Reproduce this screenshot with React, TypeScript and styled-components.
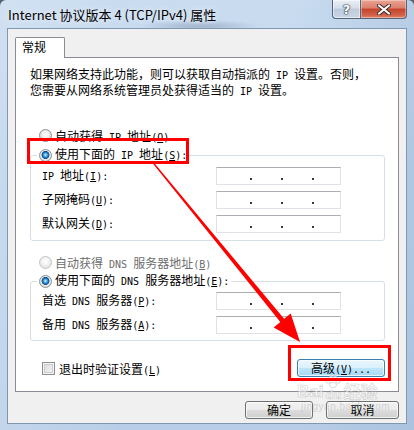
import React from "react";
import styled, { createGlobalStyle } from "styled-components";

const CJK = `"Noto Sans CJK SC", "Noto Sans", sans-serif`;

const GlobalStyle = createGlobalStyle`
  html, body { margin: 0; padding: 0; background: #56616c; }
  body { width: 414px; height: 430px; overflow: hidden; font-family: ${CJK}; font-size: 12px; color: #000; }
  #root { width: 414px; height: 430px; }
`;

const Lat = styled.span`
  font-family: "DejaVu Sans Mono", "Liberation Mono", monospace;
  font-size: 10px;
`;

function mix(s: string) {
  const parts = s.split(/([\x20-\x7E]+)/);
  return parts.map((p, i) => {
    if (!p) return null;
    if (/^[\x20-\x7E]+$/.test(p)) {
      const segs = p.split(/&(.)/);
      return (
        <Lat key={i}>
          {segs.map((s2, j) => (j % 2 === 1 ? <u key={j}>{s2}</u> : s2))}
        </Lat>
      );
    }
    return <React.Fragment key={i}>{p}</React.Fragment>;
  });
}

const Window = styled.div`
  position: relative;
  width: 414px;
  height: 430px;
  box-sizing: border-box;
  padding: 0 7px 6px;
  display: flex;
  flex-direction: column;
  border-radius: 6px 6px 0 0;
  overflow: hidden;
  background:
    radial-gradient(ellipse 60px 6px at 200px 26px, rgba(70, 90, 120, 0.3), rgba(70, 90, 120, 0) 100%),
    linear-gradient(90deg, rgba(255, 255, 255, 0.15), rgba(255, 255, 255, 0) 30%, rgba(255, 255, 255, 0) 70%, rgba(120, 150, 190, 0.2)),
    linear-gradient(180deg, #c9dcf0 0%, #bed3ea 40%, #b8cee8 100%);
`;

const TitleBar = styled.div`
  height: 28px;
  flex: none;
  display: flex;
  align-items: flex-start;
`;

const Title = styled.div`
  margin: 7px 0 0 1px;
  font-size: 13px;
  line-height: 16px;
  white-space: nowrap;
  text-shadow: 0 0 6px rgba(255, 255, 255, 0.9);
`;

const Caption = styled.div`
  display: flex;
  margin-left: auto;
  height: 19px;
`;

const HelpBtn = styled.div`
  width: 28px;
  height: 19px;
  box-sizing: border-box;
  border: 1px solid #56667a;
  border-top: none;
  border-right: none;
  border-radius: 0 0 0 4px;
  background: linear-gradient(180deg, #e9eff6 0%, #d5dfea 45%, #bccbdb 50%, #c9d6e4 100%);
  box-shadow: inset 0 0 0 1px rgba(255, 255, 255, 0.5);
  display: flex;
  align-items: center;
  justify-content: center;
  color: #fff;
  font-family: "DejaVu Sans", sans-serif;
  font-weight: bold;
  font-size: 13px;
  line-height: 13px;
  text-shadow: 0 0 1px #2a3542, 0 0 1px #2a3542, 0 0 2px #2a3542;
`;

const CloseBtn = styled.div`
  width: 47px;
  height: 19px;
  box-sizing: border-box;
  border: 1px solid #56667a;
  border-top: none;
  border-radius: 0 0 4px 0;
  background: linear-gradient(180deg, #e8a493 0%, #dc7f6b 45%, #c4432c 50%, #d2634b 85%, #e0866f 100%);
  box-shadow: inset 0 0 0 1px rgba(255, 255, 255, 0.35);
  display: flex;
  align-items: center;
  justify-content: center;
`;

const Client = styled.div`
  flex: 1;
  display: flex;
  flex-direction: column;
  box-sizing: border-box;
  background: #f0f0f0;
  border: 1px solid #8196b0;
  padding: 8px 7px 0;
`;

const TabStrip = styled.div`
  display: flex;
  height: 20px;
  flex: none;
`;

const Tab = styled.div`
  position: relative;
  z-index: 1;
  box-sizing: border-box;
  width: 50px;
  height: 21px;
  border: 1px solid #898c95;
  border-bottom: none;
  border-radius: 2px 2px 0 0;
  background: #fff;
  padding-left: 6px;
  line-height: 17px;
`;

const Panel = styled.div`
  flex: none;
  box-sizing: border-box;
  border: 1px solid #898c95;
  background: #fff;
  padding: 9px 13px 14px 14px;
  display: flex;
  flex-direction: column;
`;

const Desc = styled.p`
  margin: 0;
  line-height: 14px;
  white-space: nowrap;
`;

const OptionRow = styled.div<{ $mt: number; $disabled?: boolean }>`
  display: flex;
  align-items: center;
  gap: 3px;
  height: 14px;
  margin: ${(p) => p.$mt}px 0 0 9px;
  color: ${(p) => (p.$disabled ? "#6d6d6d" : "#000")};
  white-space: nowrap;
`;

const Radio = styled.span<{ $checked?: boolean; $disabled?: boolean }>`
  flex: none;
  width: 13px;
  height: 13px;
  box-sizing: border-box;
  border-radius: 50%;
  border: 1px solid ${(p) => (p.$disabled ? "#c2c4c6" : "#8e8f8f")};
  background: ${(p) =>
    p.$checked
      ? "radial-gradient(circle at 50% 45%, #dff3fd 0, #6fc0ef 1.2px, #1d7cc2 2.6px, #0c4a84 3.6px, #eef0f2 4.3px, #dadcdf 5.5px)"
      : p.$disabled
      ? "radial-gradient(circle at 50% 40%, #ffffff 0, #f5f5f5 3px, #e6e6e6 6px)"
      : "radial-gradient(circle at 50% 40%, #ffffff 0, #f0f0f0 3px, #d4d6d8 6px)"};
`;

const Group = styled.fieldset<{ $top: number; $bottom: number }>`
  margin: 0;
  min-width: 0;
  border: 1px solid #d5dfe5;
  border-radius: 3px;
  padding: ${(p) => p.$top}px 0 ${(p) => p.$bottom}px 6px;
`;

const Legend = styled.legend`
  padding: 0 2px;
  height: 14px;
  line-height: 14px;
  display: flex;
  align-items: center;
  gap: 3px;
  white-space: nowrap;
`;

const GroupSpacer = styled.div<{ $mt: number }>`
  margin-top: ${(p) => p.$mt}px;
`;

const Fields = styled.div`
  display: grid;
  grid-template-columns: 174px 125px;
  grid-auto-rows: 18px;
  row-gap: 6px;
  margin-left: 5px;
  align-items: center;
`;

const FieldLabel = styled.label`
  line-height: 18px;
  white-space: nowrap;
`;

const IpBox = styled.div`
  height: 18px;
  box-sizing: border-box;
  border: 1px solid #dfe3e9;
  border-top-color: #abadb3;
  background: #fff;
  display: flex;
  align-items: flex-end;
  padding: 0 0 4px 33px;
  gap: 29px;
`;

const Dot = styled.span`
  width: 2px;
  height: 2px;
  background: #3a3a3a;
`;

const BottomRow = styled.div`
  display: flex;
  align-items: center;
  justify-content: space-between;
  margin-top: 18px;
  height: 18px;
`;

const CheckLabel = styled.label`
  display: flex;
  align-items: center;
  gap: 4px;
  margin-left: 12px;
  white-space: nowrap;
`;

const CheckBox = styled.span`
  flex: none;
  width: 13px;
  height: 13px;
  box-sizing: border-box;
  border: 1px solid #8f8f8f;
  background: linear-gradient(135deg, #d6d8db, #f7f7f7);
  box-shadow: inset 0 0 0 1px #f4f4f4, inset 0 0 0 2px #c9ccd0;
`;

const Button = styled.button<{ $default?: boolean; $w: number }>`
  width: ${(p) => p.$w}px;
  height: 18px;
  box-sizing: border-box;
  margin: 0;
  padding: 0;
  border: 1px solid ${(p) => (p.$default ? "#3c7fb1" : "#707070")};
  border-radius: 3px;
  background: ${(p) =>
    p.$default
      ? "linear-gradient(180deg, #eaf6fd 0%, #d9f0fc 50%, #bee6fd 50%, #a7d9f5 100%)"
      : "linear-gradient(180deg, #f2f2f2 0%, #ebebeb 50%, #dddddd 50%, #cfcfcf 100%)"};
  box-shadow: inset 0 0 0 1px rgba(255, 255, 255, 0.7);
  font-family: ${CJK};
  font-size: 12px;
  line-height: 16px;
  color: #000;
  white-space: nowrap;
`;

const DialogButtons = styled.div`
  display: flex;
  justify-content: flex-end;
  gap: 13px;
  margin-top: 9px;
`;

const RedBox = styled.div<{ $x: number; $y: number; $w: number; $h: number }>`
  position: absolute;
  left: ${(p) => p.$x}px;
  top: ${(p) => p.$y}px;
  width: ${(p) => p.$w}px;
  height: ${(p) => p.$h}px;
  box-sizing: border-box;
  border: 3px solid #ff0000;
  pointer-events: none;
`;

const Overlay = styled.svg`
  position: absolute;
  left: 0;
  top: 0;
  pointer-events: none;
`;

const Watermark = styled.div`
  position: absolute;
  left: 297px;
  top: 375px;
  pointer-events: none;
  display: flex;
  flex-direction: column;
  align-items: flex-start;
`;

const WmTop = styled.div`
  display: flex;
  align-items: flex-end;
  gap: 2px;
`;

const WmBai = styled.span`
  font-family: "Liberation Sans", sans-serif;
  font-weight: bold;
  font-size: 17px;
  line-height: 18px;
  color: rgba(255, 255, 255, 0.55);
  -webkit-text-stroke: 0.7px rgba(150, 150, 150, 0.45);
`;

const WmPaw = styled.span`
  display: flex;
  flex-direction: column;
  align-items: center;
  font-family: "Liberation Sans", sans-serif;
  font-weight: bold;
  font-size: 13px;
  line-height: 13px;
  color: rgba(255, 255, 255, 0.55);
  -webkit-text-stroke: 0.6px rgba(150, 150, 150, 0.45);
`;

const WmJy = styled.span`
  font-family: ${CJK};
  font-weight: bold;
  font-size: 17px;
  line-height: 20px;
  color: rgba(255, 255, 255, 0.5);
  -webkit-text-stroke: 0.6px rgba(150, 150, 150, 0.45);
`;

const WmUrl = styled.span`
  font-family: "Liberation Sans", sans-serif;
  font-size: 10px;
  line-height: 12px;
  margin-left: 4px;
  letter-spacing: 0.5px;
  color: rgba(170, 170, 170, 0.45);
`;

function IpInput() {
  return (
    <IpBox>
      <Dot />
      <Dot />
      <Dot />
    </IpBox>
  );
}

export default function App() {
  return (
    <>
      <GlobalStyle />
      <Window>
        <TitleBar>
          <Title>Internet 协议版本 4 (TCP/IPv4) 属性</Title>
          <Caption>
            <HelpBtn>?</HelpBtn>
            <CloseBtn>
              <svg width="14" height="11" viewBox="0 0 14 11">
                <path d="M2 1.5 L12 9.5 M12 1.5 L2 9.5" stroke="#3b2a28" strokeWidth="4" strokeLinecap="round" />
                <path d="M2 1.5 L12 9.5 M12 1.5 L2 9.5" stroke="#fff" strokeWidth="2.2" strokeLinecap="round" />
              </svg>
            </CloseBtn>
          </Caption>
        </TitleBar>
        <Client>
          <TabStrip>
            <Tab>常规</Tab>
          </TabStrip>
          <Panel>
            <Desc>
              {mix("如果网络支持此功能，则可以获取自动指派的 IP 设置。否则，")}
              <br />
              {mix("您需要从网络系统管理员处获得适当的 IP 设置。")}
            </Desc>
            <OptionRow $mt={29}>
              <Radio />
              <span>{mix("自动获得 IP 地址(&O)")}</span>
            </OptionRow>
            <GroupSpacer $mt={6}>
              <Group $top={5} $bottom={7}>
                <Legend>
                  <Radio $checked />
                  <span>{mix("使用下面的 IP 地址(&S):")}</span>
                </Legend>
                <Fields>
                  <FieldLabel>{mix("IP 地址(&I):")}</FieldLabel>
                  <IpInput />
                  <FieldLabel>{mix("子网掩码(&U):")}</FieldLabel>
                  <IpInput />
                  <FieldLabel>{mix("默认网关(&D):")}</FieldLabel>
                  <IpInput />
                </Fields>
              </Group>
            </GroupSpacer>
            <OptionRow $mt={14} $disabled>
              <Radio $disabled />
              <span>{mix("自动获得 DNS 服务器地址(&B)")}</span>
            </OptionRow>
            <GroupSpacer $mt={5}>
              <Group $top={4} $bottom={6}>
                <Legend>
                  <Radio $checked />
                  <span>{mix("使用下面的 DNS 服务器地址(&E):")}</span>
                </Legend>
                <Fields>
                  <FieldLabel>{mix("首选 DNS 服务器(&P):")}</FieldLabel>
                  <IpInput />
                  <FieldLabel>{mix("备用 DNS 服务器(&A):")}</FieldLabel>
                  <IpInput />
                </Fields>
              </Group>
            </GroupSpacer>
            <BottomRow>
              <CheckLabel>
                <CheckBox />
                <span>{mix("退出时验证设置(&L)")}</span>
              </CheckLabel>
              <Button $default $w={88}>
                {mix("高级(&V)...")}
              </Button>
            </BottomRow>
          </Panel>
          <DialogButtons>
            <Button $w={68}>确定</Button>
            <Button $w={73}>取消</Button>
          </DialogButtons>
        </Client>

        <Watermark>
          <WmTop>
            <WmBai>Bai</WmBai>
            <WmPaw>
              <svg width="16" height="13" viewBox="0 0 16 13">
                <g fill="rgba(255,255,255,0.55)" stroke="rgba(150,150,150,0.45)" strokeWidth="0.8">
                  <ellipse cx="3" cy="6" rx="2" ry="2.4" />
                  <ellipse cx="6.2" cy="2.6" rx="2" ry="2.3" />
                  <ellipse cx="10" cy="2.6" rx="2" ry="2.3" />
                  <ellipse cx="13" cy="6" rx="2" ry="2.4" />
                  <ellipse cx="8" cy="10" rx="3.6" ry="2.6" />
                </g>
              </svg>
              <span>du</span>
            </WmPaw>
            <WmJy>经验</WmJy>
          </WmTop>
          <WmUrl>jingyan.baidu.com</WmUrl>
        </Watermark>

        <RedBox $x={27} $y={138} $w={162} $h={26} />
        <RedBox $x={288} $y={345} $w={103} $h={36} />
        <Overlay width="414" height="430" viewBox="0 0 414 430">
          <polygon
            points="153,161.6 284.1,318.8 290.7,313.4 300,342 273.7,327.4 280.3,322 152,162.4"
            fill="#ff0000"
          />
        </Overlay>
      </Window>
    </>
  );
}
